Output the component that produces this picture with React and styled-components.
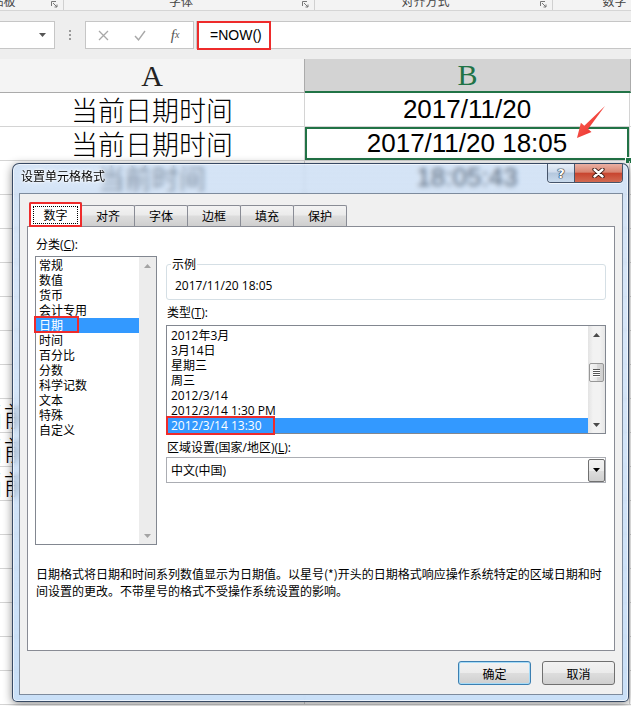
import React from 'react';
import styled, { createGlobalStyle, css } from 'styled-components';

const UI_FONT = `"Open Sans", "Noto Sans CJK SC", sans-serif`;
const CJK = `"Noto Sans CJK SC", sans-serif`;

const GlobalStyle = createGlobalStyle`
  html, body { margin: 0; padding: 0; background: #fff; }
  body { overflow: hidden; }
  #root { width: 631px; height: 706px; }
`;

const Window = styled.div`
  position: relative;
  width: 631px;
  height: 706px;
  overflow: hidden;
  background: #fff;
  font-family: ${UI_FONT};
`;

/* ---------- ribbon group labels ---------- */
const RibbonLabels = styled.div`
  display: flex;
  height: 11px;
  box-sizing: border-box;
  background: #f3f3f3;
  border-bottom: 1px solid #d5d5d5;
  overflow: hidden;
`;
const RibbonGroup = styled.div`
  flex: none;
  width: ${p => p.$w}px;
  margin-left: ${p => p.$offset || 0}px;
  display: flex;
  align-items: flex-end;
  border-right: 1px solid #d0d0d0;
  box-sizing: border-box;
`;
const GroupLabel = styled.div`
  flex: 1;
  align-self: flex-start;
  margin-top: -7px;
  text-align: center;
  font-family: ${CJK};
  font-size: 12px;
  line-height: 16px;
  color: #444;
`;
const Launcher = styled.svg`
  flex: none;
  margin: 0 5px 2px 4px;
`;

/* ---------- formula bar ---------- */
const FormulaArea = styled.div`
  display: flex;
  height: 48px;
  box-sizing: border-box;
  padding: 10px 0;
  background: #eeeeee;
`;
const NameBox = styled.div`
  flex: none;
  width: 55px;
  box-sizing: border-box;
  background: #fff;
  border: 1px solid #c6c6c6;
  border-left: none;
  display: flex;
  align-items: center;
  justify-content: flex-end;
  padding-right: 8px;
`;
const Grip = styled.div`
  flex: none;
  width: 30px;
  display: flex;
  align-items: center;
  justify-content: center;
`;
const FxBox = styled.div`
  flex: none;
  width: 109px;
  box-sizing: border-box;
  background: #fff;
  border: 1px solid #c6c6c6;
  display: flex;
  align-items: center;
`;
const FxSlot = styled.div`
  width: 36px;
  display: flex;
  align-items: center;
  justify-content: center;
  color: #555;
  font-family: "Liberation Serif", serif;
  font-style: italic;
  font-size: 15px;
  line-height: 1;
  small { font-size: 10px; }
`;
const FormulaInput = styled.div`
  flex: 1;
  margin-left: 2px;
  background: #fff;
  border: 1px solid #c6c6c6;
  border-right: none;
  display: flex;
  align-items: center;
  padding-left: 13px;
  font-family: "Liberation Sans", sans-serif;
  font-size: 14px;
  color: #000;
`;
const Marked = styled.span`
  position: relative;
  &::after {
    content: '';
    position: absolute;
    left: ${p => p.$l}px;
    top: ${p => p.$t}px;
    width: ${p => p.$w}px;
    height: ${p => p.$h}px;
    border: 2px solid #ee2b2b;
    box-sizing: border-box;
    pointer-events: none;
  }
`;

/* ---------- grid ---------- */
const HeaderRow = styled.div`
  display: flex;
  height: 34px;
`;
const HeadCell = styled.div`
  flex: none;
  width: ${p => p.$w}px;
  box-sizing: border-box;
  display: flex;
  align-items: center;
  justify-content: center;
  font-family: "Liberation Serif", serif;
  font-size: 30px;
  background: #f4f4f4;
  color: #222;
  border-right: 1px solid #ababab;
  border-bottom: 1px solid #ababab;
  ${p => p.$active && css`
    background: #d3d3d3;
    color: #217346;
    border-bottom: 2px solid #217346;
  `}
`;
const Row = styled.div`
  display: flex;
  height: 34px;
  box-sizing: border-box;
  border-bottom: 1px solid #d4d4d4;
`;
const Cell = styled.div`
  flex: none;
  width: ${p => p.$w}px;
  box-sizing: border-box;
  display: flex;
  align-items: center;
  justify-content: center;
  white-space: nowrap;
  overflow: hidden;
  border-right: 1px solid #d4d4d4;
  position: relative;
  color: #000;
  font-family: ${p => (p.$cjk ? CJK : `"Liberation Sans", sans-serif`)};
  font-size: ${p => (p.$cjk ? 27 : 26)}px;
  font-weight: ${p => (p.$cjk ? 300 : 400)};
  ${p => p.$selected && css`
    overflow: visible;
    box-shadow: inset 0 0 0 2px #217346;
  `}
`;
const FillHandle = styled.span`
  position: absolute;
  right: -3px;
  bottom: -4px;
  width: 5px;
  height: 5px;
  background: #217346;
  border: 1px solid #fff;
`;
const Arrow = styled.svg`
  position: absolute;
  left: 570px;
  top: 100px;
`;

/* ---------- dialog ---------- */
const Dialog = styled.div`
  position: absolute;
  left: 12px;
  top: 163px;
  width: 617px;
  height: 539px;
  box-sizing: border-box;
  border: 1px solid rgba(40, 58, 84, 0.9);
  border-radius: 7px 7px 5px 5px;
  background: linear-gradient(180deg, rgba(170, 200, 236, 0.5) 0%, rgba(190, 215, 244, 0.62) 30%, rgba(192, 218, 246, 0.85) 100%);
  backdrop-filter: blur(2.5px);
  box-shadow: 0 2px 10px rgba(0, 0, 0, 0.45), inset 0 0 0 1px rgba(255, 255, 255, 0.6);
  display: flex;
  flex-direction: column;
  font-family: ${UI_FONT};
  font-size: 12px;
  color: #000;
`;
const TitleBar = styled.div`
  flex: none;
  height: 29px;
  display: flex;
  align-items: flex-start;
`;
const Title = styled.div`
  padding: 5px 0 0 8px;
  line-height: 14px;
  font-family: ${CJK};
  text-shadow: 0 0 6px #fff, 0 0 3px #fff, 0 0 2px #fff;
`;
const CaptionButtons = styled.div`
  margin-left: auto;
  margin-right: 5px;
  display: flex;
  height: 18px;
  border: 1px solid #46556b;
  border-top: none;
  border-radius: 0 0 4px 4px;
  overflow: hidden;
  box-shadow: 0 1px 0 rgba(255, 255, 255, 0.7);
`;
const HelpButton = styled.div`
  width: 26px;
  display: flex;
  align-items: center;
  justify-content: center;
  background: linear-gradient(180deg, #e6eef7 0%, #cfdcec 45%, #b4c7dd 50%, #c9daec 100%);
  border-right: 1px solid #46556b;
  color: #fff;
  font-family: "DejaVu Sans", sans-serif;
  font-weight: bold;
  font-size: 13px;
  text-shadow: 0 0 1px #1e2a3a, 0 0 1px #1e2a3a, 0 0 1px #1e2a3a, 0 0 1px #1e2a3a;
`;
const CloseButton = styled.div`
  width: 47px;
  display: flex;
  align-items: center;
  justify-content: center;
  background: linear-gradient(180deg, #eab0a3 0%, #d98571 45%, #c8452f 52%, #d26a52 100%);
`;
const FrameBody = styled.div`
  flex: 1;
  display: flex;
  padding: 0 5px 6px 6px;
  min-height: 0;
`;
const Client = styled.div`
  flex: 1;
  box-sizing: border-box;
  background: #f0f0f0;
  border: 1px solid #7d8b9d;
  padding: 8px 7px 0 7px;
  display: flex;
  flex-direction: column;
`;
const TabStrip = styled.div`
  flex: none;
  height: 24px;
  display: flex;
  align-items: flex-end;
  padding-left: 2px;
  position: relative;
  z-index: 1;
`;
const Tab = styled.div`
  flex: none;
  box-sizing: border-box;
  width: 54px;
  height: 21px;
  margin-left: -1px;
  border: 1px solid #898c95;
  border-bottom: none;
  border-radius: 2px 2px 0 0;
  background: linear-gradient(180deg, #f3f3f3 0%, #ebebeb 45%, #dddddd 50%, #cfcfcf 100%);
  display: flex;
  align-items: center;
  justify-content: center;
  font-family: ${CJK};
  line-height: 14px;
  ${p => p.$active && css`
    width: 53px;
    height: 25px;
    margin-left: 0;
    margin-bottom: -1px;
    background: #fff;
    position: relative;
    z-index: 2;
    outline: 2px solid #ee2b2b;
    outline-offset: -2px;
  `}
`;
const FocusText = styled.span`
  padding: 1px 9px;
  outline: 1px dotted #000;
  outline-offset: 0;
`;
const Panel = styled.div`
  flex: none;
  height: 425px;
  box-sizing: border-box;
  border: 1px solid #898c95;
  background: #fff;
  padding: 11px 6px 0 7px;
  display: grid;
  grid-template-columns: 122px 440px;
  column-gap: 9px;
  align-content: start;
`;
const Column = styled.div`
  display: flex;
  flex-direction: column;
  padding-top: ${p => p.$top || 0}px;
`;
const Label = styled.div`
  line-height: 14px;
  padding-left: 1px;
  margin-top: ${p => p.$mt || 0}px;
  margin-bottom: ${p => p.$mb || 0}px;
  font-family: ${UI_FONT};
`;
const ListBox = styled.div`
  height: ${p => p.$h}px;
  box-sizing: border-box;
  border: 1px solid #828790;
  background: #fff;
  display: flex;
`;
const Items = styled.div`
  flex: 1;
  padding-top: ${p => p.$pt}px;
`;
const Item = styled.div`
  height: 15px;
  line-height: 15px;
  padding-left: ${p => p.$pl}px;
  white-space: nowrap;
  ${p => p.$selected && css`
    background: #3399ff;
    color: #fff;
  `}
`;
const ScrollBar = styled.div`
  flex: none;
  width: 17px;
  display: flex;
  flex-direction: column;
  background: ${p => (p.$disabled ? '#ececec' : 'linear-gradient(90deg, #e3e3e3, #f2f2f2 30%, #f2f2f2 70%, #e6e6e6)')};
`;
const ScrollButton = styled.div`
  flex: none;
  height: 17px;
  display: flex;
  align-items: center;
  justify-content: center;
`;
const Track = styled.div`
  flex: 1;
  padding-top: 20px;
  display: flex;
  flex-direction: column;
  align-items: center;
`;
const Thumb = styled.div`
  width: 15px;
  height: 19px;
  box-sizing: border-box;
  border: 1px solid #979797;
  border-radius: 2px;
  background: linear-gradient(90deg, #f4f4f4 0%, #e8e8e8 50%, #d9d9d9 51%, #cfcfcf 100%);
  display: flex;
  align-items: center;
  justify-content: center;
`;
const GroupBox = styled.fieldset`
  margin: 0;
  padding: 8px 0 6px 8px;
  border: 1px solid #d5dfe5;
  border-radius: 3px;
  min-width: 0;
  line-height: 14px;
  legend {
    margin-left: -4px;
    padding: 0 1px;
    line-height: 14px;
    font-family: ${CJK};
  }
`;
const Combo = styled.div`
  height: 26px;
  box-sizing: border-box;
  border: 1px solid #abadb3;
  background: #fff;
  display: flex;
  align-items: center;
  padding-left: 4px;
`;
const ComboButton = styled.div`
  margin-left: auto;
  margin-right: 0;
  width: 17px;
  height: 23px;
  box-sizing: border-box;
  border: 1px solid #707070;
  border-radius: 2px;
  background: linear-gradient(180deg, #f2f2f2 0%, #ebebeb 50%, #dddddd 51%, #cfcfcf 100%);
  display: flex;
  align-items: center;
  justify-content: center;
`;
const Description = styled.p`
  grid-column: 1 / -1;
  margin: 20px 0 0;
  padding-left: 1px;
  line-height: 17px;
  font-family: ${CJK};
`;
const ButtonRow = styled.div`
  display: flex;
  justify-content: flex-end;
  gap: 11px;
  margin-top: 10px;
`;
const Button = styled.div`
  width: 73px;
  height: 24px;
  box-sizing: border-box;
  border: 1px solid #707070;
  border-radius: 3px;
  background: linear-gradient(180deg, #f2f2f2 0%, #ebebeb 50%, #dddddd 51%, #cfcfcf 100%);
  display: flex;
  align-items: center;
  justify-content: center;
  font-family: ${CJK};
  ${p => p.$default && css`
    border-color: #3c7fb1;
    box-shadow: inset 0 0 0 1px #a6dbf7;
  `}
`;

/* ---------- icons ---------- */
const Tri = ({ up, color = '#000' }) => (
  <svg width="7" height="4" viewBox="0 0 7 4">
    <path d={up ? 'M0 4H7L3.5 0Z' : 'M0 0H7L3.5 4Z'} fill={color} />
  </svg>
);

const LauncherIcon = () => (
  <Launcher width="7" height="7" viewBox="0 0 7 7">
    <path d="M0.5 5V0.5H5" stroke="#777" fill="none" />
    <path d="M2 2L6 6M6 3.5V6H3.5" stroke="#777" fill="none" />
  </Launcher>
);

const ribbonGroups = [
  { label: '剪贴板', w: 116, offset: -52 },
  { label: '字体', w: 251 },
  { label: '对齐方式', w: 238 },
  { label: '数字', w: 140 },
];

const rows = [
  ['当前日期时间', '2017/11/20'],
  ['当前日期时间', '2017/11/20 18:05', true],
  ['当前时间', '18:05:43'],
  ['', ''], ['', ''], ['', ''], ['', ''], ['', ''], ['', ''],
  ['当前日期时间格式化显示结果', ''],
  ['当前日期时间格式化显示结果', ''],
  ['当前日期时间格式化显示结果', ''],
  ['', ''], ['', ''], ['', ''], ['', ''], ['', ''], ['', ''],
];

const tabs = ['数字', '对齐', '字体', '边框', '填充', '保护'];
const categories = ['常规', '数值', '货币', '会计专用', '日期', '时间', '百分比', '分数', '科学记数', '文本', '特殊', '自定义'];
const types = ['2012年3月', '3月14日', '星期三', '周三', '2012/3/14', '2012/3/14 1:30 PM', '2012/3/14 13:30'];

export default function App() {
  return (
    <Window>
      <GlobalStyle />
      <RibbonLabels>
        {ribbonGroups.map(g => (
          <RibbonGroup key={g.label} $w={g.w} $offset={g.offset}>
            <GroupLabel>{g.label}</GroupLabel>
            <LauncherIcon />
          </RibbonGroup>
        ))}
      </RibbonLabels>

      <FormulaArea>
        <NameBox>
          <Tri color="#555" />
        </NameBox>
        <Grip>
          <svg width="2" height="10" viewBox="0 0 2 10">
            <rect x="0" y="0" width="2" height="2" fill="#9a9a9a" />
            <rect x="0" y="4" width="2" height="2" fill="#9a9a9a" />
            <rect x="0" y="8" width="2" height="2" fill="#9a9a9a" />
          </svg>
        </Grip>
        <FxBox>
          <FxSlot>
            <svg width="11" height="11" viewBox="0 0 11 11">
              <path d="M1 1L10 10M10 1L1 10" stroke="#a8a8a8" strokeWidth="1.3" />
            </svg>
          </FxSlot>
          <FxSlot>
            <svg width="12" height="11" viewBox="0 0 12 11">
              <path d="M1 6L4.5 9.8L11 1" stroke="#a8a8a8" strokeWidth="1.4" fill="none" />
            </svg>
          </FxSlot>
          <FxSlot>
            f<small>x</small>
          </FxSlot>
        </FxBox>
        <FormulaInput>
          <Marked $l={-13} $t={-6} $w={74} $h={29}>=NOW()</Marked>
        </FormulaInput>
      </FormulaArea>

      <HeaderRow>
        <HeadCell $w={305}>A</HeadCell>
        <HeadCell $w={326} $active>B</HeadCell>
      </HeaderRow>
      {rows.map(([a, b, sel], i) => (
        <Row key={i}>
          <Cell $w={305} $cjk>{a}</Cell>
          <Cell $w={325} $selected={sel}>
            {b}
            {sel && <FillHandle />}
          </Cell>
        </Row>
      ))}

      <Arrow width="40" height="42" viewBox="0 0 40 42">
        <defs>
          <linearGradient id="arrowFill" x1="0" y1="0" x2="1" y2="1">
            <stop offset="0" stopColor="#ff6a5a" />
            <stop offset="1" stopColor="#e52424" />
          </linearGradient>
        </defs>
        <polygon points="35,6 18.1,29 21.5,32 7,38 10.9,22.8 14.3,25.8" fill="url(#arrowFill)" />
      </Arrow>

      <Dialog>
        <TitleBar>
          <Title>设置单元格格式</Title>
          <CaptionButtons>
            <HelpButton>?</HelpButton>
            <CloseButton>
              <svg width="13" height="10" viewBox="0 0 13 10">
                <path d="M2.5 1.5L10.5 8.5M10.5 1.5L2.5 8.5" stroke="#3a1610" strokeWidth="4.2" strokeLinecap="round" />
                <path d="M2.5 1.5L10.5 8.5M10.5 1.5L2.5 8.5" stroke="#fff" strokeWidth="2.4" strokeLinecap="round" />
              </svg>
            </CloseButton>
          </CaptionButtons>
        </TitleBar>

        <FrameBody>
          <Client>
            <TabStrip>
              {tabs.map((t, i) => (
                <Tab key={t} $active={i === 0}>
                  {i === 0 ? <FocusText>{t}</FocusText> : t}
                </Tab>
              ))}
            </TabStrip>

            <Panel>
              <Column>
                <Label $mb={4}>分类(<u>C</u>):</Label>
                <ListBox $h={289}>
                  <Items $pt={1}>
                    {categories.map(c => (
                      <Item key={c} $pl={3} $selected={c === '日期'}>
                        {c === '日期' ? <Marked $l={-5} $t={-1} $w={45} $h={17}>{c}</Marked> : c}
                      </Item>
                    ))}
                  </Items>
                  <ScrollBar $disabled>
                    <ScrollButton><Tri up color="#a3a3a3" /></ScrollButton>
                    <Track />
                    <ScrollButton><Tri color="#a3a3a3" /></ScrollButton>
                  </ScrollBar>
                </ListBox>
              </Column>

              <Column $top={19}>
                <GroupBox>
                  <legend>示例</legend>
                  2017/11/20 18:05
                </GroupBox>
                <Label $mt={6} $mb={5}>类型(<u>T</u>):</Label>
                <ListBox $h={109}>
                  <Items $pt={2}>
                    {types.map((t, i) => (
                      <Item key={t} $pl={4} $selected={i === types.length - 1}>
                        {i === types.length - 1 ? <Marked $l={-5} $t={-1} $w={109} $h={19}>{t}</Marked> : t}
                      </Item>
                    ))}
                  </Items>
                  <ScrollBar>
                    <ScrollButton><Tri up color="#4a4a4a" /></ScrollButton>
                    <Track>
                      <Thumb>
                        <svg width="7" height="8" viewBox="0 0 7 8">
                          <path d="M0 0.5H7M0 2.5H7M0 4.5H7M0 6.5H7" stroke="#555" strokeWidth="1" />
                          <path d="M0 1.5H7M0 3.5H7M0 5.5H7M0 7.5H7" stroke="#fff" strokeWidth="1" />
                        </svg>
                      </Thumb>
                    </Track>
                    <ScrollButton><Tri color="#4a4a4a" /></ScrollButton>
                  </ScrollBar>
                </ListBox>
                <Label $mt={7} $mb={2}>区域设置(国家/地区)(<u>L</u>):</Label>
                <Combo>
                  中文(中国)
                  <ComboButton><Tri /></ComboButton>
                </Combo>
              </Column>

              <Description>
                日期格式将日期和时间系列数值显示为日期值。以星号(*)开头的日期格式响应操作系统特定的区域日期和时
                <br />
                间设置的更改。不带星号的格式不受操作系统设置的影响。
              </Description>
            </Panel>

            <ButtonRow>
              <Button $default>确定</Button>
              <Button>取消</Button>
            </ButtonRow>
          </Client>
        </FrameBody>
      </Dialog>
    </Window>
  );
}
